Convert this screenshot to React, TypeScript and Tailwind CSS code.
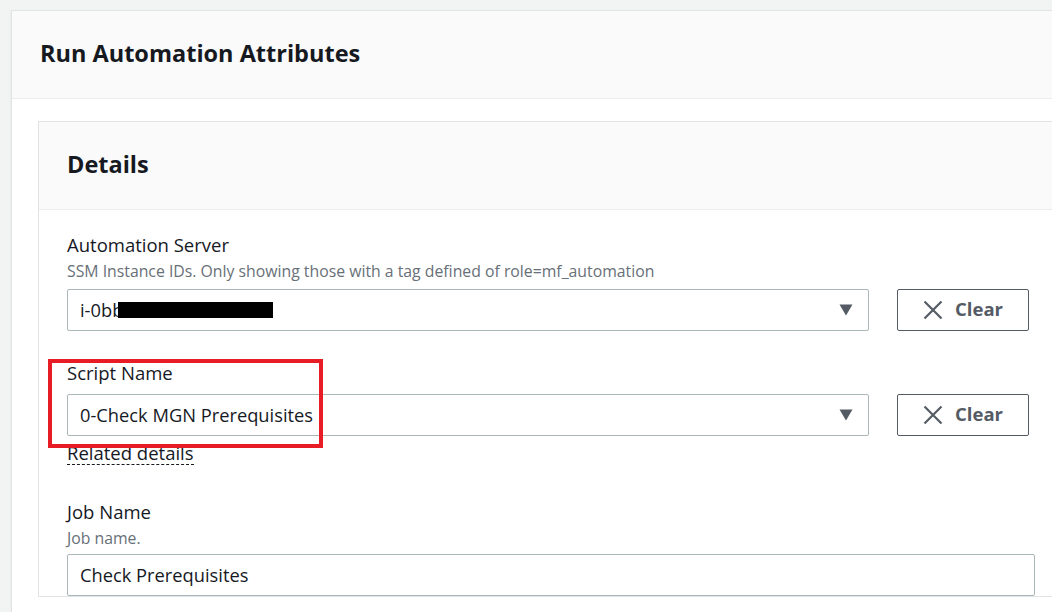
import React from "react";

const font = { fontFamily: '"Open Sans", "Noto Sans", sans-serif' };

function Caret() {
  return (
    <svg width="14" height="12" viewBox="0 0 14 12" className="shrink-0">
      <path d="M0.5 0.5 H13.5 L7 11.5 Z" fill="#545b64" />
    </svg>
  );
}

function XIcon() {
  return (
    <svg width="20" height="20" viewBox="0 0 20 20" className="shrink-0">
      <path d="M1.5 1.5 L18.5 18.5 M18.5 1.5 L1.5 18.5" stroke="#545b64" strokeWidth="2.2" strokeLinecap="butt" />
    </svg>
  );
}

function ClearButton() {
  return (
    <button className="w-[132px] h-[42px] border border-[#545b64] rounded-[2px] bg-white flex items-center justify-center gap-[12px] text-[18.5px] font-bold text-[#545b64]">
      <XIcon />
      <span className="leading-none pb-[2px]">Clear</span>
    </button>
  );
}

function Select({ children }: { children: React.ReactNode }) {
  return (
    <div className="w-[802px] h-[42px] border border-[#aab7b8] rounded-[2px] bg-white flex items-center pl-[12px] pr-[15px] text-[18.3px] text-[#16191f]">
      <div className="flex-1 flex items-center">{children}</div>
      <Caret />
    </div>
  );
}

export default function App() {
  return (
    <div style={font} className="w-[1052px] h-[612px] bg-[#f2f3f3] overflow-hidden pl-[11px] pt-[10px]">
      <div className="w-[1100px] bg-white border border-[#e1e4e4] shadow-[0_1px_1px_rgba(0,28,36,0.15)]">
        <div className="h-[88px] bg-[#fafafa] border-b border-[#eaeded] pl-[28px] flex items-center">
          <h1 className="text-[23.5px] font-bold text-[#16191f] leading-[28px] pb-[4px]">Run Automation Attributes</h1>
        </div>
        <div className="pl-[26px] pt-[22px] pb-[40px]">
          <div className="w-[1030px] bg-white border border-[#e1e4e4]">
            <div className="h-[88px] bg-[#fafafa] border-b border-[#eaeded] pl-[28px] flex items-center">
              <h2 className="text-[23.5px] font-bold text-[#16191f] leading-[28px] pb-[4px]">Details</h2>
            </div>
            <div className="pl-[28px] pt-[22px] relative">
              {/* Automation Server */}
              <div className="flex flex-col">
                <div className="text-[18.5px] leading-[26px] text-[#16191f]">Automation Server</div>
                <div className="text-[15.8px] leading-[20px] text-[#687078] mt-[3px]">
                  SSM Instance IDs. Only showing those with a tag defined of role=mf_automation
                </div>
                <div className="flex items-center gap-[28px] mt-[8px]">
                  <Select>
                    <span>i-0bb</span>
                    <span className="inline-block w-[155px] h-[16px] bg-black -ml-[5px]" />
                  </Select>
                  <ClearButton />
                </div>
              </div>

              {/* Script Name */}
              <div className="flex flex-col mt-[29px] relative">
                <div className="absolute left-[-19px] top-[-1px] w-[275px] h-[89px] border-[4px] border-[#e81c24] pointer-events-none" />
                <div className="text-[18.5px] leading-[26px] text-[#16191f]">Script Name</div>
                <div className="flex items-center gap-[28px] mt-[8px]">
                  <Select>
                    <span>0-Check MGN Prerequisites</span>
                  </Select>
                  <ClearButton />
                </div>
                <div className="mt-[6px]">
                  <span className="text-[18.5px] leading-[22px] text-[#16191f] border-b border-dashed border-[#16191f] inline-block">
                    Related details
                  </span>
                </div>
              </div>

              {/* Job Name */}
              <div className="flex flex-col mt-[33px]">
                <div className="text-[18.5px] leading-[26px] text-[#16191f]">Job Name</div>
                <div className="text-[15.8px] leading-[20px] text-[#687078] mt-[3px]">Job name.</div>
                <div className="mt-[6px] w-[968px] h-[42px] border border-[#aab7b8] rounded-[2px] bg-white flex items-center pl-[12px] text-[18.3px] text-[#16191f]">
                  Check Prerequisites
                </div>
              </div>
            </div>
          </div>
        </div>
      </div>
    </div>
  );
}
